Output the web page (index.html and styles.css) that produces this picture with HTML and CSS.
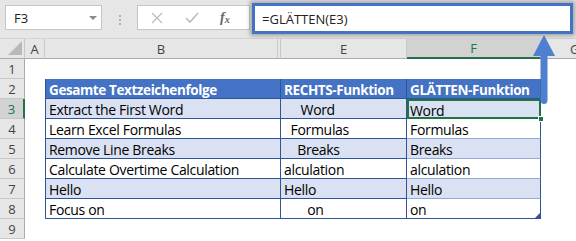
FILE: index.html
```html
<!DOCTYPE html>
<html>
<head>
<meta charset="utf-8">
<link rel="stylesheet" href="styles.css">
</head>
<body>
<div class="app">
  <div class="toolbar">
    <div class="namebox"><span>F3</span><span class="caret"></span></div>
    <div class="dots"><i></i><i></i><i></i></div>
    <div class="fxbox">
      <svg class="ico" width="12" height="12" viewBox="0 0 12 12"><path d="M1 1 L11 11 M11 1 L1 11" stroke="#bdbdbd" stroke-width="1.3" fill="none"/></svg>
      <svg class="ico" width="14" height="12" viewBox="0 0 14 12"><path d="M1 6 L5 10 L13 1" stroke="#bdbdbd" stroke-width="1.6" fill="none"/></svg>
      <span class="fx">f<sub>x</sub></span>
    </div>
    <div class="formula">=GLÄTTEN(E3)</div>
  </div>
  <div class="sheet">
    <div class="hd corner"><span class="tri"></span></div>
    <div class="hd col">A</div>
    <div class="hd col">B</div>
    <div class="hd col gap"></div>
    <div class="hd col">E</div>
    <div class="hd col sel">F</div>
    <div class="hd col last">G</div>

    <div class="hd row">1</div>
    <div class="blank"></div>

    <div class="hd row">2</div>
    <div class="cellA"></div>
    <div class="t th b">Gesamte Textzeichenfolge</div>
    <div class="t th e">RECHTS-Funktion</div>
    <div class="t th f">GLÄTTEN-Funktion</div>
    <div class="cellG"></div>

    <div class="hd row sel">3</div>
    <div class="cellA"></div>
    <div class="t band b">Extract the First Word</div>
    <div class="t band e">     Word</div>
    <div class="t band f active">Word<span class="handle"></span></div>
    <div class="cellG"></div>

    <div class="hd row">4</div>
    <div class="cellA"></div>
    <div class="t b">Learn Excel Formulas</div>
    <div class="t e">  Formulas</div>
    <div class="t f">Formulas</div>
    <div class="cellG"></div>

    <div class="hd row">5</div>
    <div class="cellA"></div>
    <div class="t band b">Remove Line Breaks</div>
    <div class="t band e">    Breaks</div>
    <div class="t band f">Breaks</div>
    <div class="cellG"></div>

    <div class="hd row">6</div>
    <div class="cellA"></div>
    <div class="t b">Calculate Overtime Calculation</div>
    <div class="t e">alculation</div>
    <div class="t f">alculation</div>
    <div class="cellG"></div>

    <div class="hd row">7</div>
    <div class="cellA"></div>
    <div class="t band b">Hello</div>
    <div class="t band e">Hello</div>
    <div class="t band f">Hello</div>
    <div class="cellG"></div>

    <div class="hd row">8</div>
    <div class="cellA"></div>
    <div class="t b lastrow">Focus on</div>
    <div class="t e lastrow">       on</div>
    <div class="t f lastrow">on<span class="resize"></span></div>
    <div class="cellG"></div>

    <div class="hd row">9</div>
    <div class="blank"></div>
  </div>
  <svg class="arrow" width="24" height="72" viewBox="0 0 24 72">
    <path d="M12 0 L23 21 L15.5 21 L15.5 65 Q15.5 69 12 69 Q8.5 69 8.5 65 L8.5 21 L1 21 Z" fill="#4f7fcf"/>
  </svg>
</div>
</body>
</html>
```
FILE: styles.css
```css
* { box-sizing: border-box; }
html, body { margin: 0; padding: 0; background: #fff; }
.app { position: relative; width: 576px; height: 241px; overflow: hidden; }
.toolbar {
  height: 39px; background: #e6e6e6; display: flex; align-items: flex-start;
  border-bottom: 1px solid #d4d4d4;
}
.namebox {
  margin: 5px 0 0 5px; width: 97px; height: 25px; background: #fff;
  border: 1px solid #c6c6c6; display: flex; align-items: center; justify-content: space-between;
  padding: 0 4px 0 8px; font: 13px "Open Sans", "Noto Sans", sans-serif; color: #222;
}
.caret { width: 0; height: 0; border-left: 4px solid transparent; border-right: 4px solid transparent; border-top: 4px solid #8a8a8a; }
.dots { width: 35px; height: 39px; display: flex; flex-direction: column; align-items: center; justify-content: center; gap: 2px; }
.dots i { display: block; width: 2px; height: 2px; background: #b0b0b0; }
.fxbox {
  margin-top: 5px; width: 113px; height: 25px; background: #fff; border: 1px solid #c6c6c6;
  display: flex; align-items: center; padding-left: 13px;
}
.fxbox .ico:first-child { margin-right: 22px; }
.fxbox .ico:nth-child(2) { margin-right: 21px; }
.fx { font: italic bold 14px "Liberation Serif", serif; color: #666; }
.fx sub { font-size: 10px; vertical-align: -1px; }
.formula {
  margin: 3px 0 0 2px; width: 321px; height: 31px; background: #fff;
  border: 3px solid #4472c4; box-shadow: 0 0 4px 2px rgba(0,0,0,0.28);
  font: 13px "Open Sans", "Noto Sans", sans-serif; color: #222; padding: 4px 0 0 7px;
}
.sheet {
  display: grid;
  grid-template-columns: 25px 20px 233px 3px 126px 134px 35px;
  grid-template-rows: 20px repeat(9, 20px);
}
.hd {
  background: #e6e6e6; color: #444; font: 13px "Open Sans", "Noto Sans", sans-serif;
  display: flex; align-items: center; justify-content: center;
}
.col { border-right: 1px solid #c8c8c8; border-bottom: 1px solid #ababab; }
.col.gap { border-right: 1px solid #c8c8c8; }
.col.last { border-right: none; justify-content: flex-start; padding-left: 29px; }
.col.sel { background: #d2d2d2; color: #217346; border-bottom: 2px solid #217346; }
.corner { border-right: 1px solid #c8c8c8; border-bottom: 1px solid #ababab; position: relative; }
.tri { position: absolute; right: 2px; bottom: 3px; width: 14px; height: 14px; background: #b8b8b8; clip-path: polygon(100% 0, 100% 100%, 0 100%); }
.row { grid-column: 1; border-right: 1px solid #ababab; border-bottom: 1px solid #c8c8c8; }
.row.sel { background: #d2d2d2; color: #217346; border-right: 2px solid #217346; }
.blank { grid-column: 2 / 8; }
.t {
  display: flex; align-items: center; padding: 2px 0 0 3px; white-space: pre; color: #000;
  border-right: 1px solid #2f5597; border-bottom: 1px solid #2f5597; position: relative;
  font: 14px "Open Sans", "Noto Sans", sans-serif; letter-spacing: -0.33px;
}
.t.b { grid-column: 3 / 5; border-left: 1px solid #2f5597; }
.t.f { border-bottom-color: #8eaadb; }
.t.lastrow { border-bottom-color: #2f5597; }
.th { background: #4472c4; color: #fff; font-weight: bold; font-size: 13.5px; letter-spacing: -0.4px; border-bottom-color: #2f5597; }
.t.th.f { border-bottom-color: #2f5597; }
.band { background: #d9e1f2; }
.active { box-shadow: inset 0 0 0 2px #217346; border: none; }
.handle { position: absolute; right: -3px; bottom: -3px; width: 6px; height: 6px; background: #217346; border: 1px solid #fff; z-index: 2; }
.resize { position: absolute; right: 0; bottom: 0; width: 5px; height: 5px; background: #2f5597; clip-path: polygon(100% 0, 100% 100%, 0 100%); }
.arrow { position: absolute; left: 532px; top: 35px; }
```
